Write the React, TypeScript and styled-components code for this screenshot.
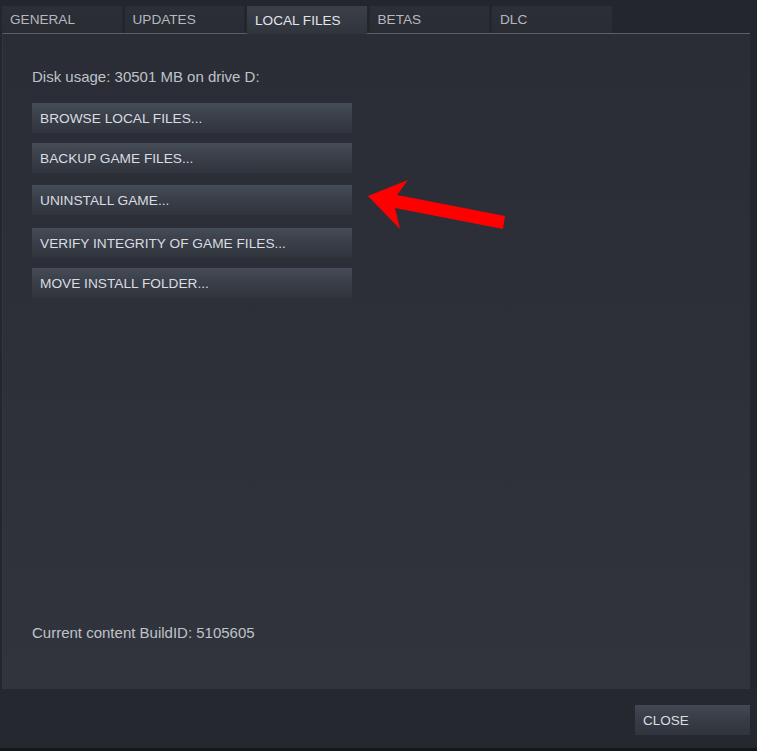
import React from "react";
import styled, { createGlobalStyle } from "styled-components";

const GlobalStyle = createGlobalStyle`
  html, body {
    margin: 0;
    padding: 0;
    background: #22252c;
  }
  * { box-sizing: border-box; }
`;

const Window = styled.div`
  position: relative;
  width: 757px;
  height: 751px;
  display: flex;
  flex-direction: column;
  background: #23262d;
  font-family: "Liberation Sans", Arial, sans-serif;
  border-bottom: 3px solid #15171b;
  overflow: hidden;
`;

const TabBar = styled.div`
  display: flex;
  gap: 3px;
  margin: 6px 0 0 2px;
  height: 27px;
  position: relative;
  z-index: 1;
`;

const Tab = styled.div<{ $active?: boolean }>`
  width: 119.5px;
  height: ${(p) => (p.$active ? "28px" : "27px")};
  margin-bottom: ${(p) => (p.$active ? "-1px" : "0")};
  display: flex;
  align-items: center;
  padding-left: 8px;
  font-size: 13.6px;
  color: ${(p) => (p.$active ? "#e2e5e9" : "#b4b8bf")};
  background: ${(p) =>
    p.$active
      ? "linear-gradient(to bottom, #3b3f48 0%, #30343c 100%)"
      : "linear-gradient(to bottom, #2c2f37 0%, #292c33 100%)"};
`;

const Panel = styled.div`
  flex: 1;
  margin: 0 7px 0 2px;
  border-top: 1px solid #5a5e66;
  border-left: 1px solid #33363e;
  background: linear-gradient(to bottom, #2a2d35 0%, #2d3038 50%, #31343d 100%);
  display: flex;
  flex-direction: column;
  padding: 34px 29px 48px 29px;
`;

const InfoText = styled.div`
  font-size: 15px;
  color: #bfc3c9;
`;

const ButtonList = styled.div`
  display: flex;
  flex-direction: column;
  margin-top: 9px;
`;

const ActionButton = styled.div<{ $space: number }>`
  width: 320px;
  height: 30px;
  margin-top: ${(p) => p.$space}px;
  display: flex;
  align-items: center;
  padding-left: 8px;
  font-size: 13.7px;
  color: #dadde2;
  background: linear-gradient(to bottom, #464c57 0%, #3a3f49 45%, #30343c 100%);
`;

const Spacer = styled.div`
  flex: 1;
`;

const Footer = styled.div`
  height: 59px;
  display: flex;
  justify-content: flex-end;
  align-items: flex-start;
  padding: 16px 7px 0 0;
  background: #25282f;
`;

const CloseButton = styled.div`
  width: 115px;
  height: 30px;
  display: flex;
  align-items: center;
  padding-left: 8px;
  font-size: 13.5px;
  color: #dadde2;
  background: linear-gradient(to bottom, #424853 0%, #373c45 50%, #30343c 100%);
`;

const ArrowOverlay = styled.svg`
  position: absolute;
  left: 0;
  top: 0;
  pointer-events: none;
`;

const tabs = ["GENERAL", "UPDATES", "LOCAL FILES", "BETAS", "DLC"];
const actions: { label: string; space: number }[] = [
  { label: "BROWSE LOCAL FILES...", space: 9 },
  { label: "BACKUP GAME FILES...", space: 10 },
  { label: "UNINSTALL GAME...", space: 12 },
  { label: "VERIFY INTEGRITY OF GAME FILES...", space: 13 },
  { label: "MOVE INSTALL FOLDER...", space: 10 },
];

export default function App() {
  return (
    <>
      <GlobalStyle />
      <Window>
        <TabBar>
          {tabs.map((t) => (
            <Tab key={t} $active={t === "LOCAL FILES"}>
              {t}
            </Tab>
          ))}
        </TabBar>
        <Panel>
          <InfoText>Disk usage: 30501 MB on drive D:</InfoText>
          <ButtonList>
            {actions.map((a) => (
              <ActionButton key={a.label} $space={a.space}>
                {a.label}
              </ActionButton>
            ))}
          </ButtonList>
          <Spacer />
          <InfoText>Current content BuildID: 5105605</InfoText>
        </Panel>
        <Footer>
          <CloseButton>CLOSE</CloseButton>
        </Footer>
        <ArrowOverlay width="757" height="751" viewBox="0 0 757 751">
          <polygon
            points="368,196 408,180 397,195 505,216 503,229 395,208 400,229"
            fill="#ff0000"
          />
        </ArrowOverlay>
      </Window>
    </>
  );
}
